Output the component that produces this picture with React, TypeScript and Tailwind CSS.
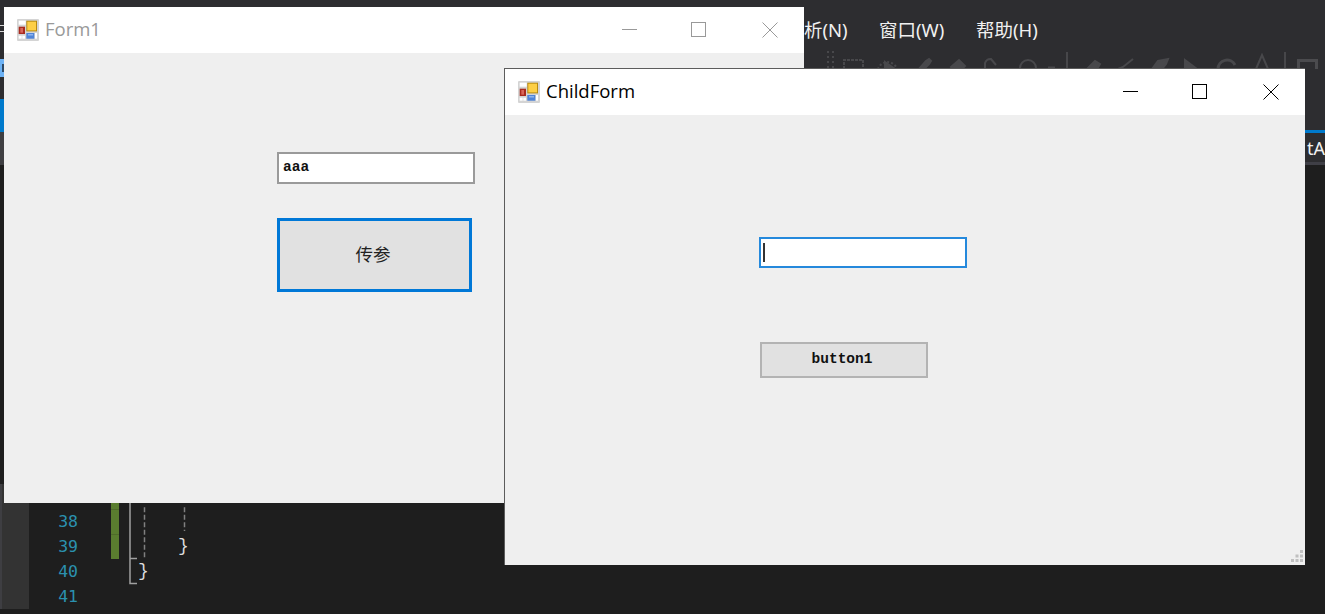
const CJK = "font-['Noto_Sans','Noto_Sans_CJK_SC',sans-serif]";
const MONO = "font-['Liberation_Mono','Noto_Sans_CJK_SC',monospace]";

const MENU_ITEMS = [
  { label: "析(N)", className: "w-[75px]" },
  { label: "窗口(W)", className: "w-[97px]" },
  { label: "帮助(H)", className: "w-[70px]" },
];

const CODE_ROWS = [
  { line: "37", changed: true, text: "", indent: 0 },
  { line: "38", changed: true, text: "", indent: 0 },
  { line: "39", changed: true, text: "}", indent: 59 },
  { line: "40", changed: false, text: "}", indent: 19 },
  { line: "41", changed: false, text: "", indent: 0 },
];

function AppIcon() {
  return (
    <svg width="22" height="22" viewBox="0 0 22 22" className="shrink-0">
      <rect width="22" height="22" rx="1" fill="#d4d4d4" />
      <rect x="1.7" y="1.7" width="7" height="4" fill="#ffffff" />
      <rect x="1.7" y="7.7" width="6.3" height="7.3" fill="#a92b1f" />
      <rect x="3.3" y="9" width="2.7" height="4.7" fill="#d9665a" />
      <rect x="1.7" y="16.7" width="3" height="3" fill="#ffffff" />
      <rect x="5.3" y="16.7" width="2.7" height="3" fill="#ffffff" />
      <rect x="9.3" y="1.7" width="10.7" height="10.7" fill="#b78a10" />
      <rect x="10.3" y="2.7" width="8.7" height="8.7" fill="#fdcf45" />
      <rect x="9.3" y="14" width="8" height="5.7" fill="#4f84d8" />
      <rect x="11" y="15" width="5" height="1.5" fill="#8fb4ec" />
      <rect x="18" y="14" width="2" height="5.7" fill="#ffffff" />
    </svg>
  );
}

function WindowControls({ color }: { color: string }) {
  return (
    <svg width="157" height="16" viewBox="0 0 157 16" fill="none" stroke={color} strokeWidth="1" shapeRendering="crispEdges">
      <path d="M0 7.5H15" />
      <rect x="69.5" y="0.5" width="14" height="14" />
      <path d="M140.5 0.5L155.5 15.5M155.5 0.5L140.5 15.5" shapeRendering="auto" />
    </svg>
  );
}

function TitleBar({ title, active }: { title: string; active: boolean }) {
  return (
    <div className="flex h-[46px] items-center bg-white pl-[13px] pr-[25px]">
      <AppIcon />
      <span className={`ml-[6px] flex-1 pb-[2px] font-['Open_Sans',sans-serif] text-[18.5px] ${active ? "text-black" : "text-[#999999]"}`}>
        {title}
      </span>
      <WindowControls color={active ? "#000000" : "#999999"} />
    </div>
  );
}

function Toolbar() {
  return (
    <svg width="500" height="19" viewBox="825 50 500 19" fill="none" stroke="#48484b" strokeWidth="2">
      <path d="M827 52h2M832 52h2M827 57h2M832 57h2M827 62h2M832 62h2M827 67h2M832 67h2" />
      <path d="M844 69V60h19v9" strokeDasharray="3 1" />
      <path d="M878 69a10 10 0 0 1 19 0" strokeDasharray="2 2" />
      <path d="M885 62l10 7h-10z" fill="#48484b" />
      <path d="M919 69l7-8 3-2 2 2-2 3-5 5z" fill="#48484b" />
      <path d="M951 67l8-7 6 6-3 3h-9z" fill="#48484b" />
      <path d="M985 69v-6a6 6 0 0 1 6-4l5 6" />
      <circle cx="1028" cy="68" r="8" />
      <path d="M1048 68h7" strokeWidth="3" />
      <path d="M1067 52v17M1285 52v17" stroke="#47474a" />
      <path d="M1087 69l8-8 5 3-3 5z" fill="#48484b" />
      <path d="M1118 69l5-2 10-8" />
      <path d="M1152 69l6-8 10-2-2 5-4 5z" fill="#48484b" />
      <path d="M1185 60l12 9h-12z" fill="#48484b" />
      <path d="M1218 69a9 9 0 0 1 17-4" strokeWidth="3" />
      <path d="M1256 69l6-14 6 14" />
      <rect x="1298.5" y="60.5" width="18" height="15" strokeWidth="3" stroke="#4b4b4e" />
    </svg>
  );
}

function LeftStrip() {
  return (
    <div className="flex h-[165px] w-[4px] shrink-0 flex-col">
      <div className="h-[25px]" />
      <div className="h-px bg-[#d8d8d8]" />
      <div className="h-[5px]" />
      <div className="h-px bg-[#d8d8d8]" />
      <div className="h-[27px]" />
      <div className="flex h-[18px] items-center justify-end bg-[#6db2f5]">
        <div className="h-[8px] w-[2px] bg-[#2d4a68]" />
      </div>
      <div className="h-[22px]" />
      <div className="h-[33px] bg-[#007acc]" />
      <div className="h-[33px] bg-[#3f3f42]" />
    </div>
  );
}

function EditorGuides() {
  return (
    <svg width="80" height="125" viewBox="111 484 80 125" fill="none" className="absolute left-[111px] top-[319px]">
      <path d="M130 484V583.5H137M130 558.5H137" stroke="#a0a0a0" strokeWidth="1.5" />
      <path d="M144.5 507.3V559M184.5 507.3V531" stroke="#808080" strokeWidth="1.5" strokeDasharray="5 2.5" />
    </svg>
  );
}

function ResizeGrip() {
  return (
    <svg width="14" height="14" viewBox="0 0 14 14" fill="#c0c0c0" className="absolute bottom-[1px] right-[1px]">
      <rect x="10" y="0" width="3" height="3" />
      <rect x="5.5" y="4.5" width="3" height="3" />
      <rect x="10" y="4.5" width="3" height="3" />
      <rect x="1" y="9" width="3" height="3" />
      <rect x="5.5" y="9" width="3" height="3" />
      <rect x="10" y="9" width="3" height="3" />
    </svg>
  );
}

function App() {
  return (
    <div className={`relative flex h-[614px] w-[1325px] flex-col overflow-hidden bg-[#1e1e1e] ${CJK}`}>
      {/* ide behind the forms */}
      <div className="flex h-[165px] shrink-0 bg-[#2d2d30]">
        <LeftStrip />
        <div className="flex min-w-0 flex-1 flex-col">
          <div className="flex h-[50px] shrink-0 items-center whitespace-nowrap pl-[800px] pt-[10px] text-[18.5px] leading-none text-[#f1f1f1]">
            {MENU_ITEMS.map((item) => (
              <span key={item.label} className={item.className}>
                {item.label}
              </span>
            ))}
          </div>
          <div className="h-[19px] shrink-0 pl-[821px]">
            <Toolbar />
          </div>
          <div className="mt-[61px] h-[3px] shrink-0 bg-[#007acc]" />
          <div className="flex h-[29px] shrink-0 items-center justify-end bg-[#2d2d30] text-[18px] leading-none text-[#f1f1f1]">
            tA
          </div>
          <div className="h-[3px] shrink-0 bg-[#3f3f46]" />
        </div>
      </div>

      <div className="relative flex flex-1 flex-col pt-[319px]">
        {CODE_ROWS.map((row) => (
          <div key={row.line} className="flex h-[25px]">
            <div className="w-[2px] bg-[#3e3e42]" />
            <div className="w-[27px] bg-[#333333]" />
            <div className="w-[49px] text-right font-['DejaVu_Sans_Mono',monospace] text-[16.5px] leading-[26px] text-[#2b91af]">
              {row.line}
            </div>
            <div className="w-[33px]" />
            <div className={`w-[8px] border-t ${row.changed ? "border-[#4f6b2a] bg-[#5a7d2f]" : "border-transparent"}`} />
            <div style={{ paddingLeft: row.indent }} className={`${MONO} text-[18px] leading-[25px] text-[#dcdcdc]`}>
              {row.text}
            </div>
          </div>
        ))}
        <EditorGuides />
      </div>

      {/* Form1 */}
      <div className="absolute left-[4px] top-[7px] flex h-[496px] w-[800px] flex-col bg-[#efefef]">
        <TitleBar title="Form1" active={false} />
        <div className="flex flex-col items-start pl-[273px] pt-[99px]">
          <div className={`flex h-[32px] w-[198px] items-center border-2 border-[#9a9a9a] bg-white pl-[4px] ${MONO} text-[14.5px] font-bold text-[#111111]`}>
            aaa
          </div>
          <button className="mt-[34px] flex h-[74px] w-[195px] items-center justify-center border-[3px] border-[#0078d7] bg-[#e1e1e1] pb-[2px] pr-[3px] text-[17.5px] text-[#222222]">
            传参
          </button>
        </div>
      </div>

      {/* ChildForm */}
      <div className="absolute left-[504px] top-[68px] flex h-[497px] w-[801px] flex-col border-l border-t border-[#5c5c5c] bg-[#efefef]">
        <TitleBar title="ChildForm" active />
        <div className="flex flex-col items-start pl-[254px] pt-[122px]">
          <div className="flex h-[31px] w-[208px] items-center border-2 border-[#2589dc] bg-white pl-[2px]">
            <div className="h-[19px] w-[2px] bg-[#333333]" />
          </div>
          <button className={`ml-px mt-[74px] flex h-[36px] w-[168px] items-center justify-center border-2 border-[#b3b3b3] bg-[#e1e1e1] pr-[4px] ${MONO} text-[14.5px] font-bold text-[#111111]`}>
            button1
          </button>
        </div>
        <ResizeGrip />
      </div>
    </div>
  );
}

export default App;
